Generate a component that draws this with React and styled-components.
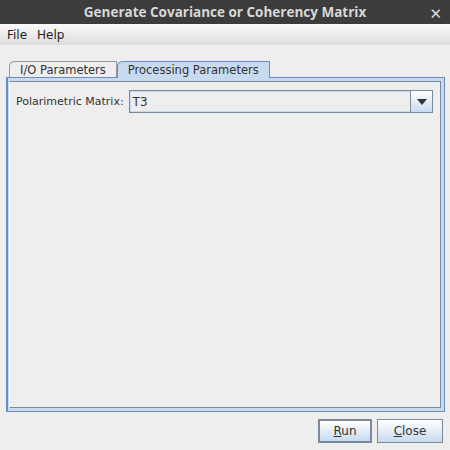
import React, { useState } from 'react';
import styled, { createGlobalStyle } from 'styled-components';

const GlobalStyle = createGlobalStyle`
  html, body {
    margin: 0;
    padding: 0;
    background: #eeeeee;
  }
  body {
    font-family: "DejaVu Sans", "Liberation Sans", sans-serif;
    font-size: 11.5px;
    color: #333333;
  }
`;

const Window = styled.div`
  width: 450px;
  height: 450px;
  display: flex;
  flex-direction: column;
  background: #eeeeee;
  overflow: hidden;
`;

const TitleBar = styled.div`
  height: 24px;
  flex: none;
  background: #3c3c3c;
  display: flex;
  align-items: center;
  justify-content: center;
  position: relative;
  color: #d8d8d8;
  font-family: "Open Sans", "DejaVu Sans", sans-serif;
  font-weight: bold;
  font-size: 13.5px;
`;

const CloseX = styled.span`
  position: absolute;
  right: 8px;
  top: 3px;
  font-size: 15px;
  color: #dcdcdc;
`;

const MenuBar = styled.div`
  height: 21px;
  flex: none;
  display: flex;
  align-items: center;
  gap: 10px;
  padding-left: 7px;
  background: linear-gradient(#fbfbfb, #dcdcdc);
  color: #222222;
  font-size: 12px;
`;

const Body = styled.div`
  flex: 1;
  display: flex;
  flex-direction: column;
  padding: 15px 5px 0 6px;
`;

const TabStrip = styled.div`
  display: flex;
  align-items: flex-end;
  padding-left: 3px;
  height: 17px;
`;

const Tab = styled.div`
  height: ${(p) => (p.$active ? '17px' : '16px')};
  box-sizing: border-box;
  padding: 0 10px;
  display: flex;
  align-items: center;
  border: 1px solid ${(p) => (p.$active ? '#6b8ccb' : '#8e9aa6')};
  border-bottom: none;
  border-top-left-radius: 6px 5px;
  background: ${(p) => (p.$active ? '#c8daf0' : '#eeeeee')};
  color: #333333;
  position: relative;
  z-index: ${(p) => (p.$active ? 2 : 1)};
  margin-bottom: ${(p) => (p.$active ? '-1px' : '0')};
`;

const Panel = styled.div`
  flex: 1;
  border: 1px solid #6b8ccb;
  border-left-width: 2px;
  background: #c8daf0;
  padding: 3px 3px 3px 1px;
  display: flex;
`;

const PanelInner = styled.div`
  flex: 1;
  background: #eeeeee;
  border-top: 1px solid #7a8a99;
  border-left: 1px solid #ffffff;
  border-right: 1px solid #7a8a99;
  border-bottom: 1px solid #7a8a99;
  padding: 8px 7px 0 6px;
`;

const FieldRow = styled.div`
  display: flex;
  align-items: center;
  gap: 5px;
`;

const Label = styled.span`
  color: #333333;
  font-size: 11px;
`;

const Combo = styled.div`
  flex: 1;
  height: 23px;
  box-sizing: border-box;
  display: flex;
  border: 1px solid #7a8a99;
  background: #eeeeee;
`;

const ComboValue = styled.div`
  flex: 1;
  display: flex;
  align-items: center;
  padding-left: 2px;
  border: 1px solid #c8daf0;
  border-right: none;
  color: #333333;
  font-size: 12px;
`;

const ComboArrow = styled.div`
  width: 21px;
  border-left: 1px solid #7a8a99;
  background: linear-gradient(#ffffff, #c8daf0);
  display: flex;
  align-items: center;
  justify-content: center;
`;

const Footer = styled.div`
  height: 38px;
  flex: none;
  display: flex;
  justify-content: flex-end;
  align-items: center;
  gap: 5px;
  padding-right: 7px;
`;

const Button = styled.button`
  height: 24px;
  padding: 0;
  width: ${(p) => p.$w}px;
  box-sizing: border-box;
  font-family: "DejaVu Sans", sans-serif;
  font-size: 12px;
  color: #333333;
  border: ${(p) => (p.$default ? '2px' : '1px')} solid #7a8a99;
  background: linear-gradient(#ffffff, #c8daf0);
  cursor: pointer;
  u { text-decoration: underline; }
`;

const App = () => {
  const [tab, setTab] = useState(1);

  return (
    <Window>
      <GlobalStyle />
      <TitleBar>
        Generate Covariance or Coherency Matrix
        <CloseX>✕</CloseX>
      </TitleBar>
      <MenuBar>
        <span>File</span>
        <span>Help</span>
      </MenuBar>
      <Body>
        <TabStrip>
          <Tab $active={tab === 0} onClick={() => setTab(0)}>I/O Parameters</Tab>
          <Tab $active={tab === 1} onClick={() => setTab(1)}>Processing Parameters</Tab>
        </TabStrip>
        <Panel>
          <PanelInner>
            <FieldRow>
              <Label>Polarimetric Matrix:</Label>
              <Combo>
                <ComboValue>T3</ComboValue>
                <ComboArrow>
                  <svg width="10" height="6" viewBox="0 0 10 6">
                    <path d="M0 0 H10 L5 6 Z" fill="#333333" />
                  </svg>
                </ComboArrow>
              </Combo>
            </FieldRow>
          </PanelInner>
        </Panel>
      </Body>
      <Footer>
        <Button $default $w={54}><u>R</u>un</Button>
        <Button $w={66}><u>C</u>lose</Button>
      </Footer>
    </Window>
  );
};

export default App;
